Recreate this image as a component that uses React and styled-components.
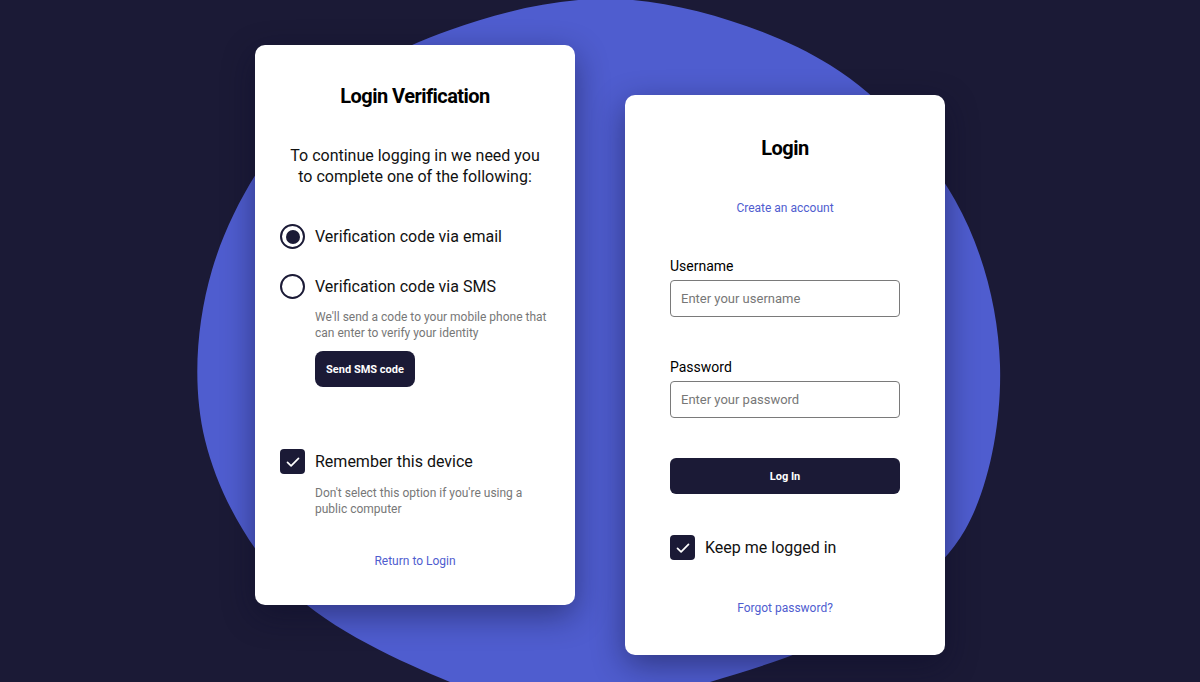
import React from "react";
import styled, { createGlobalStyle } from "styled-components";

const GlobalStyle = createGlobalStyle`
  html, body { margin: 0; padding: 0; }
  body {
    background: #1b1a36;
    font-family: Roboto, "Liberation Sans", Arial, sans-serif;
    -webkit-font-smoothing: antialiased;
  }
  * { box-sizing: border-box; }
`;

const Page = styled.div`
  position: relative;
  width: 1200px;
  height: 682px;
  overflow: hidden;
  background: #1b1a36;
`;

const Backdrop = styled.svg`
  position: absolute;
  inset: 0;
  width: 1200px;
  height: 682px;
`;

const Stage = styled.main`
  position: relative;
  display: flex;
  justify-content: center;
  align-items: flex-start;
  gap: 50px;
  padding-top: 45px;
`;

const Card = styled.section`
  width: 320px;
  height: 560px;
  background: #fff;
  border-radius: 10px;
  box-shadow: 0 10px 32px rgba(12, 10, 40, 0.45);
  display: flex;
  flex-direction: column;
  padding: 0 ${(p) => p.$pad}px;
  margin-top: ${(p) => p.$offset || 0}px;
`;

const Title = styled.h1`
  margin: ${(p) => p.$top}px 0 0;
  font-size: 20px;
  line-height: 24px;
  font-weight: 700;
  letter-spacing: -0.55px;
  color: #000;
  text-align: center;
`;

const Intro = styled.p`
  margin: 37px 0 0;
  font-size: 16px;
  line-height: 21px;
  color: #111;
  text-align: center;
`;

const OptionRow = styled.label`
  display: flex;
  align-items: center;
  gap: 10px;
  height: 25px;
  margin-top: ${(p) => p.$top}px;
  font-size: 16px;
  color: #111;
`;

const Radio = styled.span`
  width: 25px;
  height: 25px;
  border-radius: 50%;
  border: 2.5px solid #1b1a36;
  display: flex;
  align-items: center;
  justify-content: center;
  flex-shrink: 0;
  &::after {
    content: "";
    width: 14px;
    height: 14px;
    border-radius: 50%;
    background: ${(p) => (p.$checked ? "#1b1a36" : "transparent")};
  }
`;

const Box = styled.span`
  width: 25px;
  height: 25px;
  border-radius: 4px;
  background: #1b1a36;
  display: flex;
  align-items: center;
  justify-content: center;
  flex-shrink: 0;
`;

const Hint = styled.p`
  margin: ${(p) => p.$top}px 0 0 35px;
  font-size: 12px;
  line-height: 16px;
  color: #777;
`;

const DarkButton = styled.button`
  border: none;
  background: #1b1a36;
  color: #fff;
  font-family: Roboto, "Liberation Sans", Arial, sans-serif;
  font-size: 11px;
  font-weight: 700;
  height: 36px;
  border-radius: ${(p) => (p.$wide ? 6 : 8)}px;
  width: ${(p) => (p.$wide ? "100%" : "100px")};
  margin: ${(p) => p.$top}px 0 0 ${(p) => (p.$wide ? 0 : 35)}px;
  padding: 0;
  cursor: pointer;
`;

const Link = styled.a`
  display: block;
  margin-top: ${(p) => p.$top}px;
  font-size: 12px;
  line-height: 16px;
  color: #4f5dcf;
  text-align: center;
  text-decoration: none;
`;

const FieldLabel = styled.label`
  display: block;
  margin-top: ${(p) => p.$top}px;
  font-size: 14px;
  line-height: 16px;
  font-weight: 400;
  color: #000;
`;

const Input = styled.input`
  display: block;
  width: 100%;
  height: 37px;
  margin-top: 6px;
  border: 1px solid #7a7a7a;
  border-radius: 4px;
  padding: 0 10px;
  font-family: Roboto, "Liberation Sans", Arial, sans-serif;
  font-size: 13px;
  color: #111;
  outline: none;
  &::placeholder { color: #777; }
`;

const Check = () => (
  <svg width="16" height="16" viewBox="0 0 16 16" fill="none">
    <polyline points="2.5,8.4 6.1,11.8 13.5,4.4" stroke="#fff" strokeWidth="1.7" strokeLinecap="round" strokeLinejoin="round" />
  </svg>
);

const blobPoints = [
  [633, 0], [830, 65], [955, 200], [1000, 365], [965, 530],
  [850, 628], [710, 682], [580, 710], [450, 682],
  [290, 590], [205, 440], [212, 270], [300, 118], [450, 30],
];

function smoothPath(pts) {
  const n = pts.length;
  let d = `M${pts[0][0]},${pts[0][1]}`;
  for (let i = 0; i < n; i++) {
    const p0 = pts[(i - 1 + n) % n];
    const p1 = pts[i];
    const p2 = pts[(i + 1) % n];
    const p3 = pts[(i + 2) % n];
    const c1x = p1[0] + (p2[0] - p0[0]) / 6;
    const c1y = p1[1] + (p2[1] - p0[1]) / 6;
    const c2x = p2[0] - (p3[0] - p1[0]) / 6;
    const c2y = p2[1] - (p3[1] - p1[1]) / 6;
    d += ` C${c1x.toFixed(1)},${c1y.toFixed(1)} ${c2x.toFixed(1)},${c2y.toFixed(1)} ${p2[0]},${p2[1]}`;
  }
  return d + "Z";
}

export default function App() {
  return (
    <>
      <GlobalStyle />
      <Page>
        <Backdrop viewBox="0 0 1200 682" aria-hidden="true">
          <path d={smoothPath(blobPoints)} fill="#4f5dcf" />
        </Backdrop>
        <Stage>
          <Card $pad={25}>
            <Title $top={39}>Login Verification</Title>
            <Intro>
              To continue logging in we need you
              <br />
              to complete one of the following:
            </Intro>
            <OptionRow $top={37}>
              <Radio $checked />
              Verification code via email
            </OptionRow>
            <OptionRow $top={25}>
              <Radio />
              Verification code via SMS
            </OptionRow>
            <Hint $top={10}>
              We'll send a code to your mobile phone that
              <br />
              can enter to verify your identity
            </Hint>
            <DarkButton $top={10}>Send SMS code</DarkButton>
            <OptionRow $top={62}>
              <Box>
                <Check />
              </Box>
              Remember this device
            </OptionRow>
            <Hint $top={11}>
              Don't select this option if you're using a
              <br />
              public computer
            </Hint>
            <Link href="#" $top={36}>Return to Login</Link>
          </Card>

          <Card $pad={45} $offset={50}>
            <Title $top={41}>Login</Title>
            <Link href="#" $top={40}>Create an account</Link>
            <FieldLabel $top={42}>Username</FieldLabel>
            <Input placeholder="Enter your username" />
            <FieldLabel $top={42}>Password</FieldLabel>
            <Input type="password" placeholder="Enter your password" />
            <DarkButton $wide $top={40}>Log In</DarkButton>
            <OptionRow $top={41}>
              <Box>
                <Check />
              </Box>
              Keep me logged in
            </OptionRow>
            <Link href="#" $top={40}>Forgot password?</Link>
          </Card>
        </Stage>
      </Page>
    </>
  );
}
